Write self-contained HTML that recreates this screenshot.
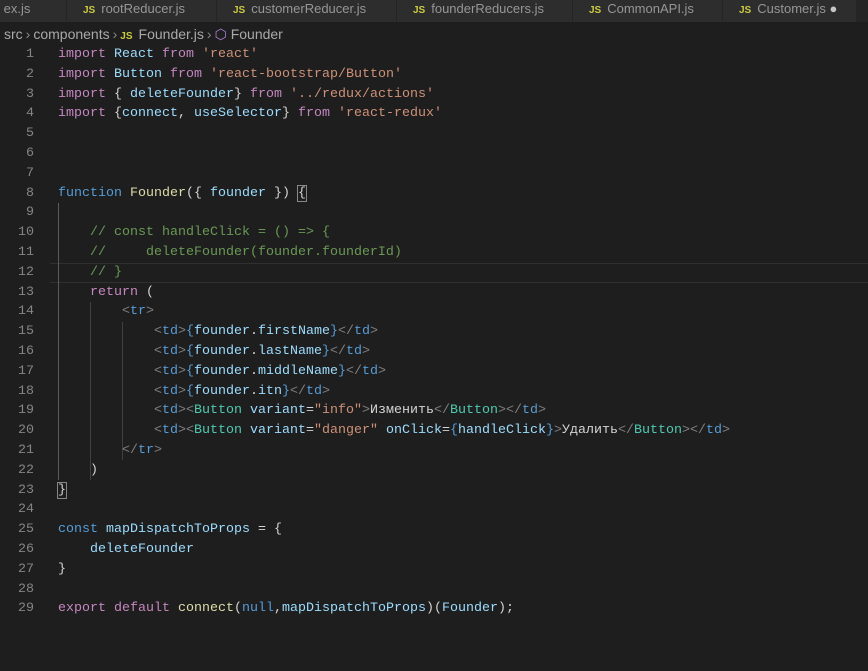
<!DOCTYPE html>
<html><head><meta charset="utf-8"><style>
*{margin:0;padding:0;box-sizing:border-box}
body{width:868px;height:671px;background:#1e1e1e;overflow:hidden;position:relative;font-family:"Liberation Sans",sans-serif}
.tabs{position:absolute;top:0;left:0;width:868px;height:22px;background:#252526}
.tab{position:absolute;top:0;height:22px;background:#2d2d2d;border-right:1px solid #252526;color:#969696;font-size:13px;line-height:18px;white-space:nowrap;overflow:hidden}
.js{color:#cbcb41;font-weight:bold;font-size:10px;margin-right:6px}
.bc{position:absolute;top:25px;left:4px;color:#a9a9a9;font-size:14px;line-height:19px;white-space:nowrap}
.bc .s{color:#8a8a8a;margin:0 3px}
.code{position:absolute;top:45px;left:0;font-family:"Liberation Mono",monospace;font-size:13.33px}
.l{position:absolute;left:0;height:19.8px;line-height:19.8px;white-space:pre;width:868px}
.n{position:absolute;left:0;width:34px;text-align:right;color:#858585}
.t{position:absolute;left:58px;color:#d4d4d4}
.k{color:#c586c0}.v{color:#9cdcfe}.s1{color:#ce9178}.f{color:#dcdcaa}.c{color:#6a9955}.b{color:#569cd6}.g{color:#808080}.cl{color:#4ec9b0}
.box{outline:1px solid #888;}
.g1{position:absolute;width:1px;background:#404040}
</style></head><body>
<div class="tabs">
<div class="tab" style="left:0;width:67px;padding-left:0">&nbsp;ex.js</div>
<div class="tab" style="left:67px;width:150px;padding-left:16px"><span class="js">JS</span>rootReducer.js</div>
<div class="tab" style="left:217px;width:180px;padding-left:16px"><span class="js">JS</span>customerReducer.js</div>
<div class="tab" style="left:397px;width:176px;padding-left:16px"><span class="js">JS</span>founderReducers.js</div>
<div class="tab" style="left:573px;width:150px;padding-left:16px"><span class="js">JS</span>CommonAPI.js</div>
<div class="tab" style="left:723px;width:134px;padding-left:16px"><span class="js">JS</span>Customer.js <span style="color:#c5c5c5">●</span></div>
</div>
<div class="bc">src<span class="s">›</span>components<span class="s">›</span><span class="js">JS</span>Founder.js<span class="s">›</span><span style="color:#b180d7">⬡</span> Founder</div>
<div class="code">
<div style="position:absolute;top:217.8px;left:50px;width:818px;height:19.8px;border-top:1px solid #303030;border-bottom:1px solid #303030"></div>
<div class="g1" style="left:58px;top:158px;height:277px;background:#5a5a5a"></div>
<div class="g1" style="left:90px;top:257px;height:178px"></div>
<div class="g1" style="left:122px;top:277px;height:138px"></div>
<div class="l" style="top:0"><span class="n">1</span><span class="t"><span class="k">import</span> <span class="v">React</span> <span class="k">from</span> <span class="s1">'react'</span></span></div>
<div class="l" style="top:19.8px"><span class="n">2</span><span class="t"><span class="k">import</span> <span class="v">Button</span> <span class="k">from</span> <span class="s1">'react-bootstrap/Button'</span></span></div>
<div class="l" style="top:39.6px"><span class="n">3</span><span class="t"><span class="k">import</span> { <span class="v">deleteFounder</span>} <span class="k">from</span> <span class="s1">'../redux/actions'</span></span></div>
<div class="l" style="top:59.4px"><span class="n">4</span><span class="t"><span class="k">import</span> {<span class="v">connect</span>, <span class="v">useSelector</span>} <span class="k">from</span> <span class="s1">'react-redux'</span></span></div>
<div class="l" style="top:79.2px"><span class="n">5</span></div>
<div class="l" style="top:99px"><span class="n">6</span></div>
<div class="l" style="top:118.8px"><span class="n">7</span></div>
<div class="l" style="top:138.6px"><span class="n">8</span><span class="t"><span class="b">function</span> <span class="f">Founder</span>({ <span class="v">founder</span> }) <span class="box">{</span></span></div>
<div class="l" style="top:158.4px"><span class="n">9</span></div>
<div class="l" style="top:178.2px"><span class="n">10</span><span class="t">    <span class="c">// const handleClick = () =&gt; {</span></span></div>
<div class="l" style="top:198px"><span class="n">11</span><span class="t">    <span class="c">//     deleteFounder(founder.founderId)</span></span></div>
<div class="l" style="top:217.8px"><span class="n">12</span><span class="t">    <span class="c">// }</span></span></div>
<div class="l" style="top:237.6px"><span class="n">13</span><span class="t">    <span class="k">return</span> (</span></div>
<div class="l" style="top:257.4px"><span class="n">14</span><span class="t">        <span class="g">&lt;</span><span class="b">tr</span><span class="g">&gt;</span></span></div>
<div class="l" style="top:277.2px"><span class="n">15</span><span class="t">            <span class="g">&lt;</span><span class="b">td</span><span class="g">&gt;</span><span class="b">{</span><span class="v">founder</span>.<span class="v">firstName</span><span class="b">}</span><span class="g">&lt;/</span><span class="b">td</span><span class="g">&gt;</span></span></div>
<div class="l" style="top:297px"><span class="n">16</span><span class="t">            <span class="g">&lt;</span><span class="b">td</span><span class="g">&gt;</span><span class="b">{</span><span class="v">founder</span>.<span class="v">lastName</span><span class="b">}</span><span class="g">&lt;/</span><span class="b">td</span><span class="g">&gt;</span></span></div>
<div class="l" style="top:316.8px"><span class="n">17</span><span class="t">            <span class="g">&lt;</span><span class="b">td</span><span class="g">&gt;</span><span class="b">{</span><span class="v">founder</span>.<span class="v">middleName</span><span class="b">}</span><span class="g">&lt;/</span><span class="b">td</span><span class="g">&gt;</span></span></div>
<div class="l" style="top:336.6px"><span class="n">18</span><span class="t">            <span class="g">&lt;</span><span class="b">td</span><span class="g">&gt;</span><span class="b">{</span><span class="v">founder</span>.<span class="v">itn</span><span class="b">}</span><span class="g">&lt;/</span><span class="b">td</span><span class="g">&gt;</span></span></div>
<div class="l" style="top:356.4px"><span class="n">19</span><span class="t">            <span class="g">&lt;</span><span class="b">td</span><span class="g">&gt;&lt;</span><span class="cl">Button</span> <span class="v">variant</span>=<span class="s1">"info"</span><span class="g">&gt;</span>Изменить<span class="g">&lt;/</span><span class="cl">Button</span><span class="g">&gt;&lt;/</span><span class="b">td</span><span class="g">&gt;</span></span></div>
<div class="l" style="top:376.2px"><span class="n">20</span><span class="t">            <span class="g">&lt;</span><span class="b">td</span><span class="g">&gt;&lt;</span><span class="cl">Button</span> <span class="v">variant</span>=<span class="s1">"danger"</span> <span class="v">onClick</span>=<span class="b">{</span><span class="v">handleClick</span><span class="b">}</span><span class="g">&gt;</span>Удалить<span class="g">&lt;/</span><span class="cl">Button</span><span class="g">&gt;&lt;/</span><span class="b">td</span><span class="g">&gt;</span></span></div>
<div class="l" style="top:396px"><span class="n">21</span><span class="t">        <span class="g">&lt;/</span><span class="b">tr</span><span class="g">&gt;</span></span></div>
<div class="l" style="top:415.8px"><span class="n">22</span><span class="t">    )</span></div>
<div class="l" style="top:435.6px"><span class="n">23</span><span class="t"><span class="box">}</span></span></div>
<div class="l" style="top:455.4px"><span class="n">24</span></div>
<div class="l" style="top:475.2px"><span class="n">25</span><span class="t"><span class="b">const</span> <span class="v">mapDispatchToProps</span> = {</span></div>
<div class="l" style="top:495px"><span class="n">26</span><span class="t">    <span class="v">deleteFounder</span></span></div>
<div class="l" style="top:514.8px"><span class="n">27</span><span class="t">}</span></div>
<div class="l" style="top:534.6px"><span class="n">28</span></div>
<div class="l" style="top:554.4px"><span class="n">29</span><span class="t"><span class="k">export</span> <span class="k">default</span> <span class="f">connect</span>(<span class="b">null</span>,<span class="v">mapDispatchToProps</span>)(<span class="v">Founder</span>);</span></div>
</div>
</body></html>
